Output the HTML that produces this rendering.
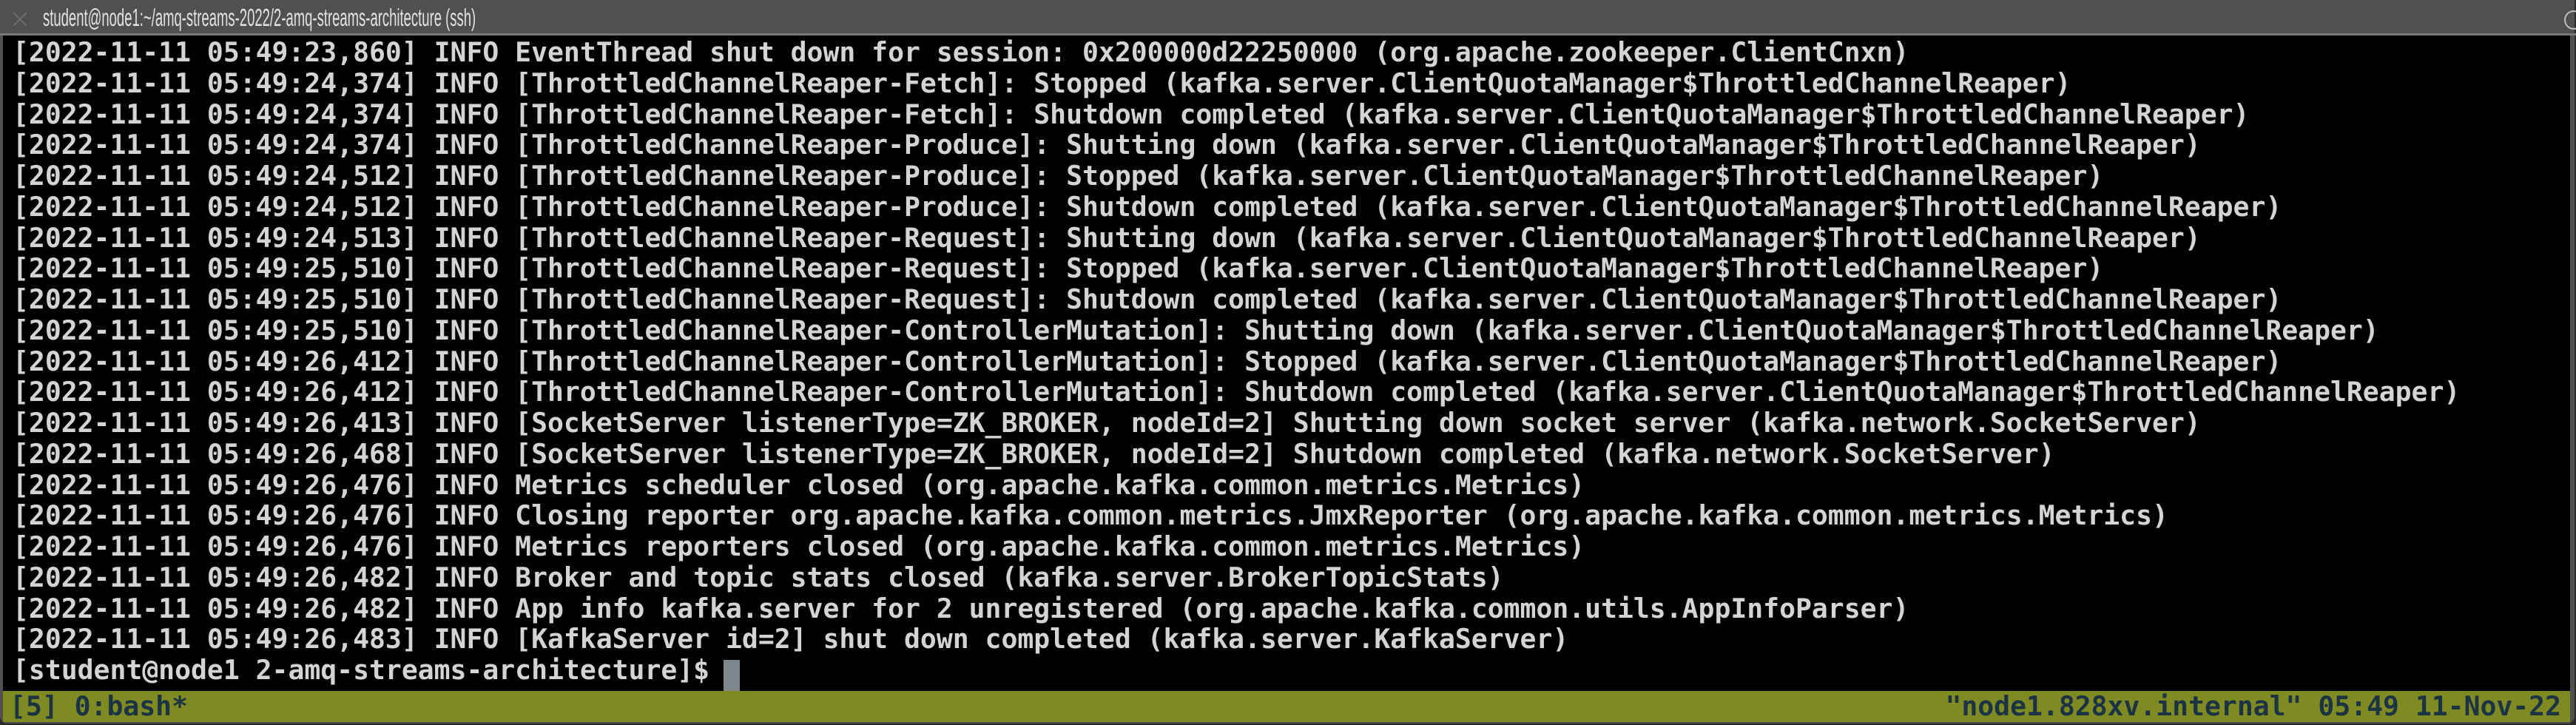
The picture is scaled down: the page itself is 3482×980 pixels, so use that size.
<!DOCTYPE html>
<html><head><meta charset="utf-8"><style>
html,body{margin:0;padding:0;}
body{width:3482px;height:980px;background:#2a2a2a;position:relative;overflow:hidden;}
#win{position:absolute;left:0;top:0;width:3480px;height:978px;background:#505050;border-radius:0 0 10px 10px;}
#title{position:absolute;left:2px;top:3px;width:3478px;height:42px;background:#505050;}
#tline{position:absolute;left:0;top:45px;width:3482px;height:3px;background:#7a7a7a;}
#x{position:absolute;left:15px;top:14px;width:24px;height:24px;}
#ttext{position:absolute;left:58px;top:5px;font:33px "Liberation Sans",sans-serif;color:#e2e2e2;transform:scaleX(0.56);transform-origin:0 0;white-space:nowrap;}
#circ{position:absolute;left:3466px;top:14px;width:22px;height:22px;border:2px solid #bdbdbd;border-radius:50%;}
#term{position:absolute;left:4px;top:48px;width:3470px;height:928px;background:#000;}
pre{position:absolute;left:13px;top:2px;margin:0;font:36.4px "DejaVu Sans Mono","Liberation Mono",monospace;line-height:41.75px;color:#d4d4d4;font-weight:bold;}
#cur{position:absolute;left:974px;top:844px;width:22px;height:42px;background:#7d878c;}
#bar{position:absolute;left:0;top:886px;width:3470px;height:42px;background:#7f8a22;color:#1c3344;font:36.4px "DejaVu Sans Mono","Liberation Mono",monospace;font-weight:bold;line-height:42px;}
#bl{position:absolute;left:9px;top:0;}
#br{position:absolute;right:12px;top:0;}
</style></head><body>
<div id="win">
<div id="title"></div>
<svg id="x" viewBox="0 0 24 24"><path d="M3 3L21 21M21 3L3 21" stroke="#6c6c6c" stroke-width="2.2"/></svg>
<div id="ttext">student@node1:~/amq-streams-2022/2-amq-streams-architecture (ssh)</div>
<div id="circ"></div>
<div id="tline"></div>
<div id="term">
<pre>[2022-11-11 05:49:23,860] INFO EventThread shut down for session: 0x200000d22250000 (org.apache.zookeeper.ClientCnxn)
[2022-11-11 05:49:24,374] INFO [ThrottledChannelReaper-Fetch]: Stopped (kafka.server.ClientQuotaManager$ThrottledChannelReaper)
[2022-11-11 05:49:24,374] INFO [ThrottledChannelReaper-Fetch]: Shutdown completed (kafka.server.ClientQuotaManager$ThrottledChannelReaper)
[2022-11-11 05:49:24,374] INFO [ThrottledChannelReaper-Produce]: Shutting down (kafka.server.ClientQuotaManager$ThrottledChannelReaper)
[2022-11-11 05:49:24,512] INFO [ThrottledChannelReaper-Produce]: Stopped (kafka.server.ClientQuotaManager$ThrottledChannelReaper)
[2022-11-11 05:49:24,512] INFO [ThrottledChannelReaper-Produce]: Shutdown completed (kafka.server.ClientQuotaManager$ThrottledChannelReaper)
[2022-11-11 05:49:24,513] INFO [ThrottledChannelReaper-Request]: Shutting down (kafka.server.ClientQuotaManager$ThrottledChannelReaper)
[2022-11-11 05:49:25,510] INFO [ThrottledChannelReaper-Request]: Stopped (kafka.server.ClientQuotaManager$ThrottledChannelReaper)
[2022-11-11 05:49:25,510] INFO [ThrottledChannelReaper-Request]: Shutdown completed (kafka.server.ClientQuotaManager$ThrottledChannelReaper)
[2022-11-11 05:49:25,510] INFO [ThrottledChannelReaper-ControllerMutation]: Shutting down (kafka.server.ClientQuotaManager$ThrottledChannelReaper)
[2022-11-11 05:49:26,412] INFO [ThrottledChannelReaper-ControllerMutation]: Stopped (kafka.server.ClientQuotaManager$ThrottledChannelReaper)
[2022-11-11 05:49:26,412] INFO [ThrottledChannelReaper-ControllerMutation]: Shutdown completed (kafka.server.ClientQuotaManager$ThrottledChannelReaper)
[2022-11-11 05:49:26,413] INFO [SocketServer listenerType=ZK_BROKER, nodeId=2] Shutting down socket server (kafka.network.SocketServer)
[2022-11-11 05:49:26,468] INFO [SocketServer listenerType=ZK_BROKER, nodeId=2] Shutdown completed (kafka.network.SocketServer)
[2022-11-11 05:49:26,476] INFO Metrics scheduler closed (org.apache.kafka.common.metrics.Metrics)
[2022-11-11 05:49:26,476] INFO Closing reporter org.apache.kafka.common.metrics.JmxReporter (org.apache.kafka.common.metrics.Metrics)
[2022-11-11 05:49:26,476] INFO Metrics reporters closed (org.apache.kafka.common.metrics.Metrics)
[2022-11-11 05:49:26,482] INFO Broker and topic stats closed (kafka.server.BrokerTopicStats)
[2022-11-11 05:49:26,482] INFO App info kafka.server for 2 unregistered (org.apache.kafka.common.utils.AppInfoParser)
[2022-11-11 05:49:26,483] INFO [KafkaServer id=2] shut down completed (kafka.server.KafkaServer)
[student@node1 2-amq-streams-architecture]$ </pre>
<div id="cur"></div>
<div id="bar"><span id="bl">[5] 0:bash*</span><span id="br">"node1.828xv.internal" 05:49 11-Nov-22</span></div>
</div>
</div>
</body></html>
